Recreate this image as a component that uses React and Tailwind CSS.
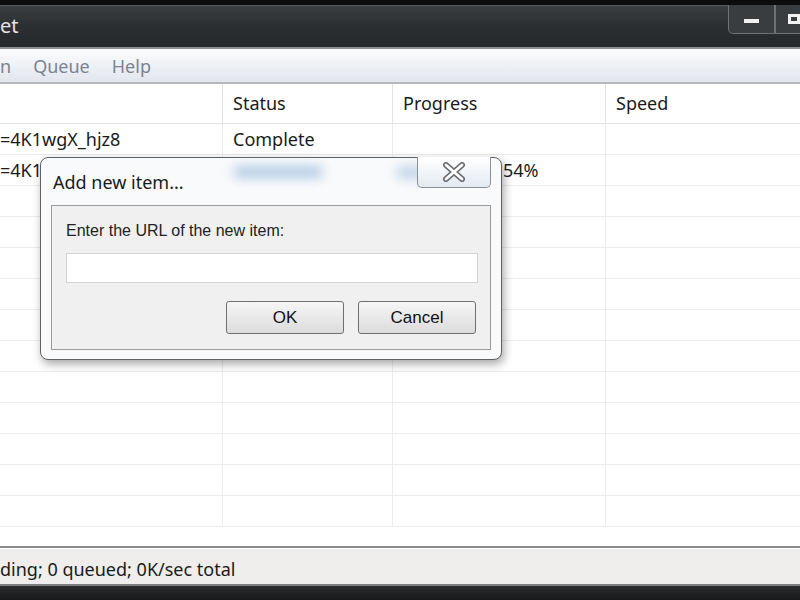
import { useState } from "react";

const cols = ["w-[223px]", "w-[170px]", "w-[213px]", "flex-1"];

// one grid row of the download list
function Row({ cells }) {
    return (
        <div className="flex h-[31px] border-b border-[#ececec]">
            {cols.map((c, i) => (
                <div
                    key={i}
                    className={`${c} flex items-center whitespace-nowrap overflow-hidden ${i < 3 ? "border-r border-[#ececec]" : ""} ${i === 0 ? "pl-0" : "pl-[10px]"}`}
                >
                    {cells[i]}
                </div>
            ))}
        </div>
    );
}

function AddItemDialog() {
    const [url, setUrl] = useState("");
    return (
        <div className="absolute left-[40px] top-[157px] w-[462px] h-[203px] rounded-[8px] border border-[#5f6266] bg-[#f9fafb] shadow-[2px_4px_10px_rgba(0,0,0,0.35)] font-['Liberation_Sans',sans-serif]">
            {/* glass blur of what's behind the title bar */}
            <span className="absolute left-[192px] top-[8px] w-[90px] h-[12px] rounded-full bg-[#9fbde0] blur-[6px] opacity-80"></span>
            <span className="absolute left-[355px] top-[8px] w-[34px] h-[13px] rounded-full bg-[#a9c3e0] blur-[6px] opacity-70"></span>
            <div className="h-[47px] pl-[12px] pt-[11px] text-[18px] text-[#1a1a1a] font-['Noto_Sans',sans-serif]">
                Add new item...
            </div>
            <button className="absolute left-[376px] top-[-1px] w-[74px] h-[31px] rounded-b-[5px] border border-[#8c9096] border-t-0 bg-gradient-to-b from-[#ffffff] to-[#e4eaf1] flex items-center justify-center">
                <svg width="28" height="20" viewBox="0 0 28 20">
                    <path d="M6 3 L22 17 M22 3 L6 17" stroke="#6a6d72" strokeWidth="6" strokeLinecap="round" />
                    <path d="M6 3 L22 17 M22 3 L6 17" stroke="#ffffff" strokeWidth="2.8" strokeLinecap="round" />
                </svg>
            </button>
            <div className="mx-[10px] h-[145px] border border-[#9a9a9a] bg-[#f0f0f0] px-[14px] pt-[15px]">
                <div className="text-[16px] leading-[20px] text-[#222]">Enter the URL of the new item:</div>
                <input
                    value={url}
                    onChange={(e) => setUrl(e.target.value)}
                    className="mt-[12px] w-[412px] h-[30px] border border-[#d4d4d4] bg-white outline-none px-1 text-[15px]"
                />
                <div className="mt-[18px] flex justify-end gap-[14px]">
                    <button className="w-[118px] h-[33px] rounded-[3px] border border-[#707070] bg-gradient-to-b from-[#f6f6f6] to-[#dcdcdc] text-[17px] text-[#111]">
                        OK
                    </button>
                    <button className="w-[118px] h-[33px] rounded-[3px] border border-[#707070] bg-gradient-to-b from-[#f6f6f6] to-[#dcdcdc] text-[17px] text-[#111]">
                        Cancel
                    </button>
                </div>
            </div>
        </div>
    );
}

export default function App() {
    const empty = Array.from({ length: 11 });
    return (
        <div className="relative w-[800px] h-[600px] overflow-hidden bg-white font-['Noto_Sans',sans-serif] text-[18px] text-[#1b1b1b]">
            {/* title bar */}
            <div className="h-[5px] bg-[#0c0c0c]"></div>
            <div className="relative h-[42px] bg-gradient-to-b from-[#3b3e41] via-[#2c2f31] to-[#25282a] border-t border-[#55585c]">
                <span className="absolute left-0 top-[5px] text-[20px] text-[#e2e2e2]">et</span>
                <div className="absolute right-0 top-[-1px] flex">
                    <div className="w-[47px] h-[29px] rounded-bl-[5px] border border-t-0 border-[#6d7074] bg-[#3a3d40] flex items-center justify-center pt-[3px]">
                        <div className="w-[15px] h-[4px] bg-[#f2f2f2]"></div>
                    </div>
                    <div className="w-[25px] h-[29px] border-b border-l border-[#6d7074] bg-[#3a3d40] flex items-center pl-[12px]">
                        <div className="w-[14px] h-[10px] border-[3px] border-[#f2f2f2]"></div>
                    </div>
                </div>
            </div>
            <div className="h-[2px] bg-[#8e9094]"></div>

            {/* menu bar */}
            <div className="h-[35px] bg-gradient-to-b from-[#fbfcfd] to-[#e2e6ed] flex items-center pt-[1px] text-[#7b8391] border-b-2 border-[#b5b8bd]">
                <span>n</span>
                <span className="ml-[22px]">Queue</span>
                <span className="ml-[22px]">Help</span>
            </div>

            {/* list */}
            <div className="h-[462px] overflow-hidden">
                <div className="flex h-[40px] border-b border-[#e3e3e3]">
                    <div className="w-[223px] border-r border-[#e3e3e3]"></div>
                    <div className="w-[170px] border-r border-[#e3e3e3] pl-[10px] flex items-center">Status</div>
                    <div className="w-[213px] border-r border-[#e3e3e3] pl-[10px] flex items-center">Progress</div>
                    <div className="flex-1 pl-[10px] flex items-center">Speed</div>
                </div>
                <Row cells={["=4K1wgX_hjz8", "Complete", "", ""]} />
                <Row cells={["=4K1", "", <span className="pl-[100px]">54%</span>, ""]} />
                {empty.map((_, i) => (
                    <Row key={i} cells={["", "", "", ""]} />
                ))}
            </div>

            {/* status bar */}
            <div className="h-[2px] bg-[#8a8a8a]"></div>
            <div className="h-[36px] bg-[#efeeec] flex items-center pt-[5px] border-t border-white">
                ding; 0 queued; 0K/sec total
            </div>
            <div className="h-[2px] bg-[#7d7f82]"></div>
            <div className="h-[20px] bg-gradient-to-b from-[#2a2c2e] to-[#111213]"></div>

            <AddItemDialog />
        </div>
    );
}
